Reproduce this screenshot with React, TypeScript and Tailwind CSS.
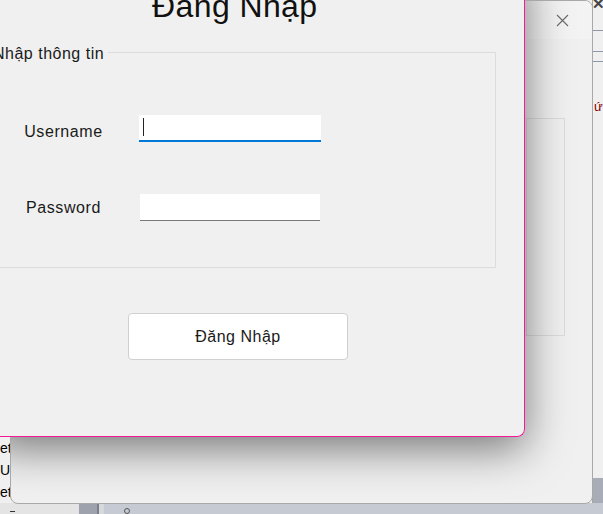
import React from 'react';

const font = { fontFamily: '"Liberation Sans", Arial, sans-serif' };

function CloseIcon() {
    return (
        <svg width="13" height="13" viewBox="0 0 13 13" fill="none">
            <path d="M1 1L12 12M12 1L1 12" stroke="#6b6b6b" strokeWidth="1.1" />
        </svg>
    );
}

function BackgroundApp() {
    return (
        <>
            {/* left strip of the app behind */}
            <div className="absolute left-0 top-[436px] w-[12px] flex flex-col text-[14px] leading-[22px] text-black pt-[1px]">
                <span>et</span>
                <span>Us</span>
                <span>et</span>
            </div>
            {/* right strip */}
            <div className="absolute left-[592px] top-0 w-[11px] h-[503px] border-l border-[#a4a4a4]">
                <div className="absolute right-[-2px] top-[-4px] text-[15px] font-bold text-[#444] leading-none">✕</div>
                <div className="mt-[30px] h-px bg-[#8f98a8]" />
                <div className="mt-[20px] h-px bg-[#8f98a8]" />
                <div className="mt-[9px] h-px bg-[#8f98a8]" />
                <div className="mt-[38px] text-[13px] text-[#8b0000] leading-none pl-[1px]">ứr</div>
                <div className="absolute bottom-0 left-0 right-0 h-[25px] bg-[#a8acb6]" />
            </div>
            {/* bottom bar */}
            <div className="absolute left-0 top-[503px] w-[603px] h-[11px] flex">
                <div className="w-[79px] bg-[#e4e4e4] relative">
                    <div className="absolute left-[10px] top-[8px] w-[5px] h-px bg-[#333]" />
                </div>
                <div className="w-[18px] bg-[#9ea2ac]" />
                <div className="w-[2px] bg-[#7c808a]" />
                <div className="w-[5px] bg-[#d6d8dc]" />
                <div className="flex-1 bg-[#c6cad2] relative">
                    <div className="absolute left-[20px] top-[5px] w-[6px] h-[6px] rounded-full border border-[#555]" />
                </div>
            </div>
        </>
    );
}

function MiddleWindow() {
    return (
        <div className="absolute left-[10px] top-0 w-[583px] h-[504px] rounded-lg border border-[#a8a8a8] bg-[#f0f0f0] overflow-hidden">
            <div className="h-[38px] bg-[#f3f3f3] flex justify-end items-start pt-[13px] pr-[23px]">
                <CloseIcon />
            </div>
            <div className="ml-[515px] mt-[79px] w-[39px] h-[218px] border border-[#dcdcdc]" />
            {/* shadow cast by the front dialog */}
            <div className="absolute left-[-20px] top-[-40px] w-[534px] h-[476px] rounded-br-lg shadow-[0_12px_44px_rgba(0,0,0,0.5)]" />
        </div>
    );
}

function LoginDialog() {
    return (
        <div
            className="absolute left-[-10px] top-[-20px] w-[535px] h-[457px] bg-[#f0f0f0] border-r border-b border-[#f21a98] rounded-br-lg"
            style={font}
        >
            <h1 className="ml-[162px] mt-[8px] text-[32px] leading-[36px] tracking-[0.4px] text-[#111] whitespace-nowrap">
                Đăng Nhập
            </h1>

            <div className="relative ml-[5px] mt-[28px] w-[501px] border border-[#dcdcdc] pt-[62px] pb-[46px] pl-[8px]">
                <span className="absolute left-[-3px] top-[-8px] bg-[#f0f0f0] pr-[4px] text-[16px] leading-[18px] tracking-[0.5px] text-[#1a1a1a] whitespace-nowrap">
                    Nhập thông tin
                </span>

                <div className="flex items-center h-[27px]">
                    <label className="w-[119px] pt-[6px] text-center text-[16px] tracking-[0.6px] text-[#1a1a1a]">Username</label>
                    <div className="relative ml-[16px] w-[182px] h-[27px] bg-white border-b-2 border-[#0078d7]">
                        <div className="absolute left-[4px] top-[3px] w-px h-[18px] bg-[#222]" />
                    </div>
                </div>

                <div className="flex items-center h-[27px] mt-[52px]">
                    <label className="w-[119px] text-center text-[16px] tracking-[0.6px] text-[#1a1a1a]">Password</label>
                    <div className="ml-[17px] w-[180px] h-[27px] bg-white border-b border-[#7a7a7a]" />
                </div>
            </div>

            <button className="ml-[138px] mt-[45px] w-[220px] h-[47px] bg-white border border-[#d0d0d0] rounded-[4px] text-[16px] tracking-[0.5px] text-[#1a1a1a]">
                Đăng Nhập
            </button>
        </div>
    );
}

export default function App() {
    return (
        <div className="relative w-[603px] h-[514px] overflow-hidden bg-[#f0f0f0]" style={font}>
            <BackgroundApp />
            <MiddleWindow />
            <LoginDialog />
        </div>
    );
}
